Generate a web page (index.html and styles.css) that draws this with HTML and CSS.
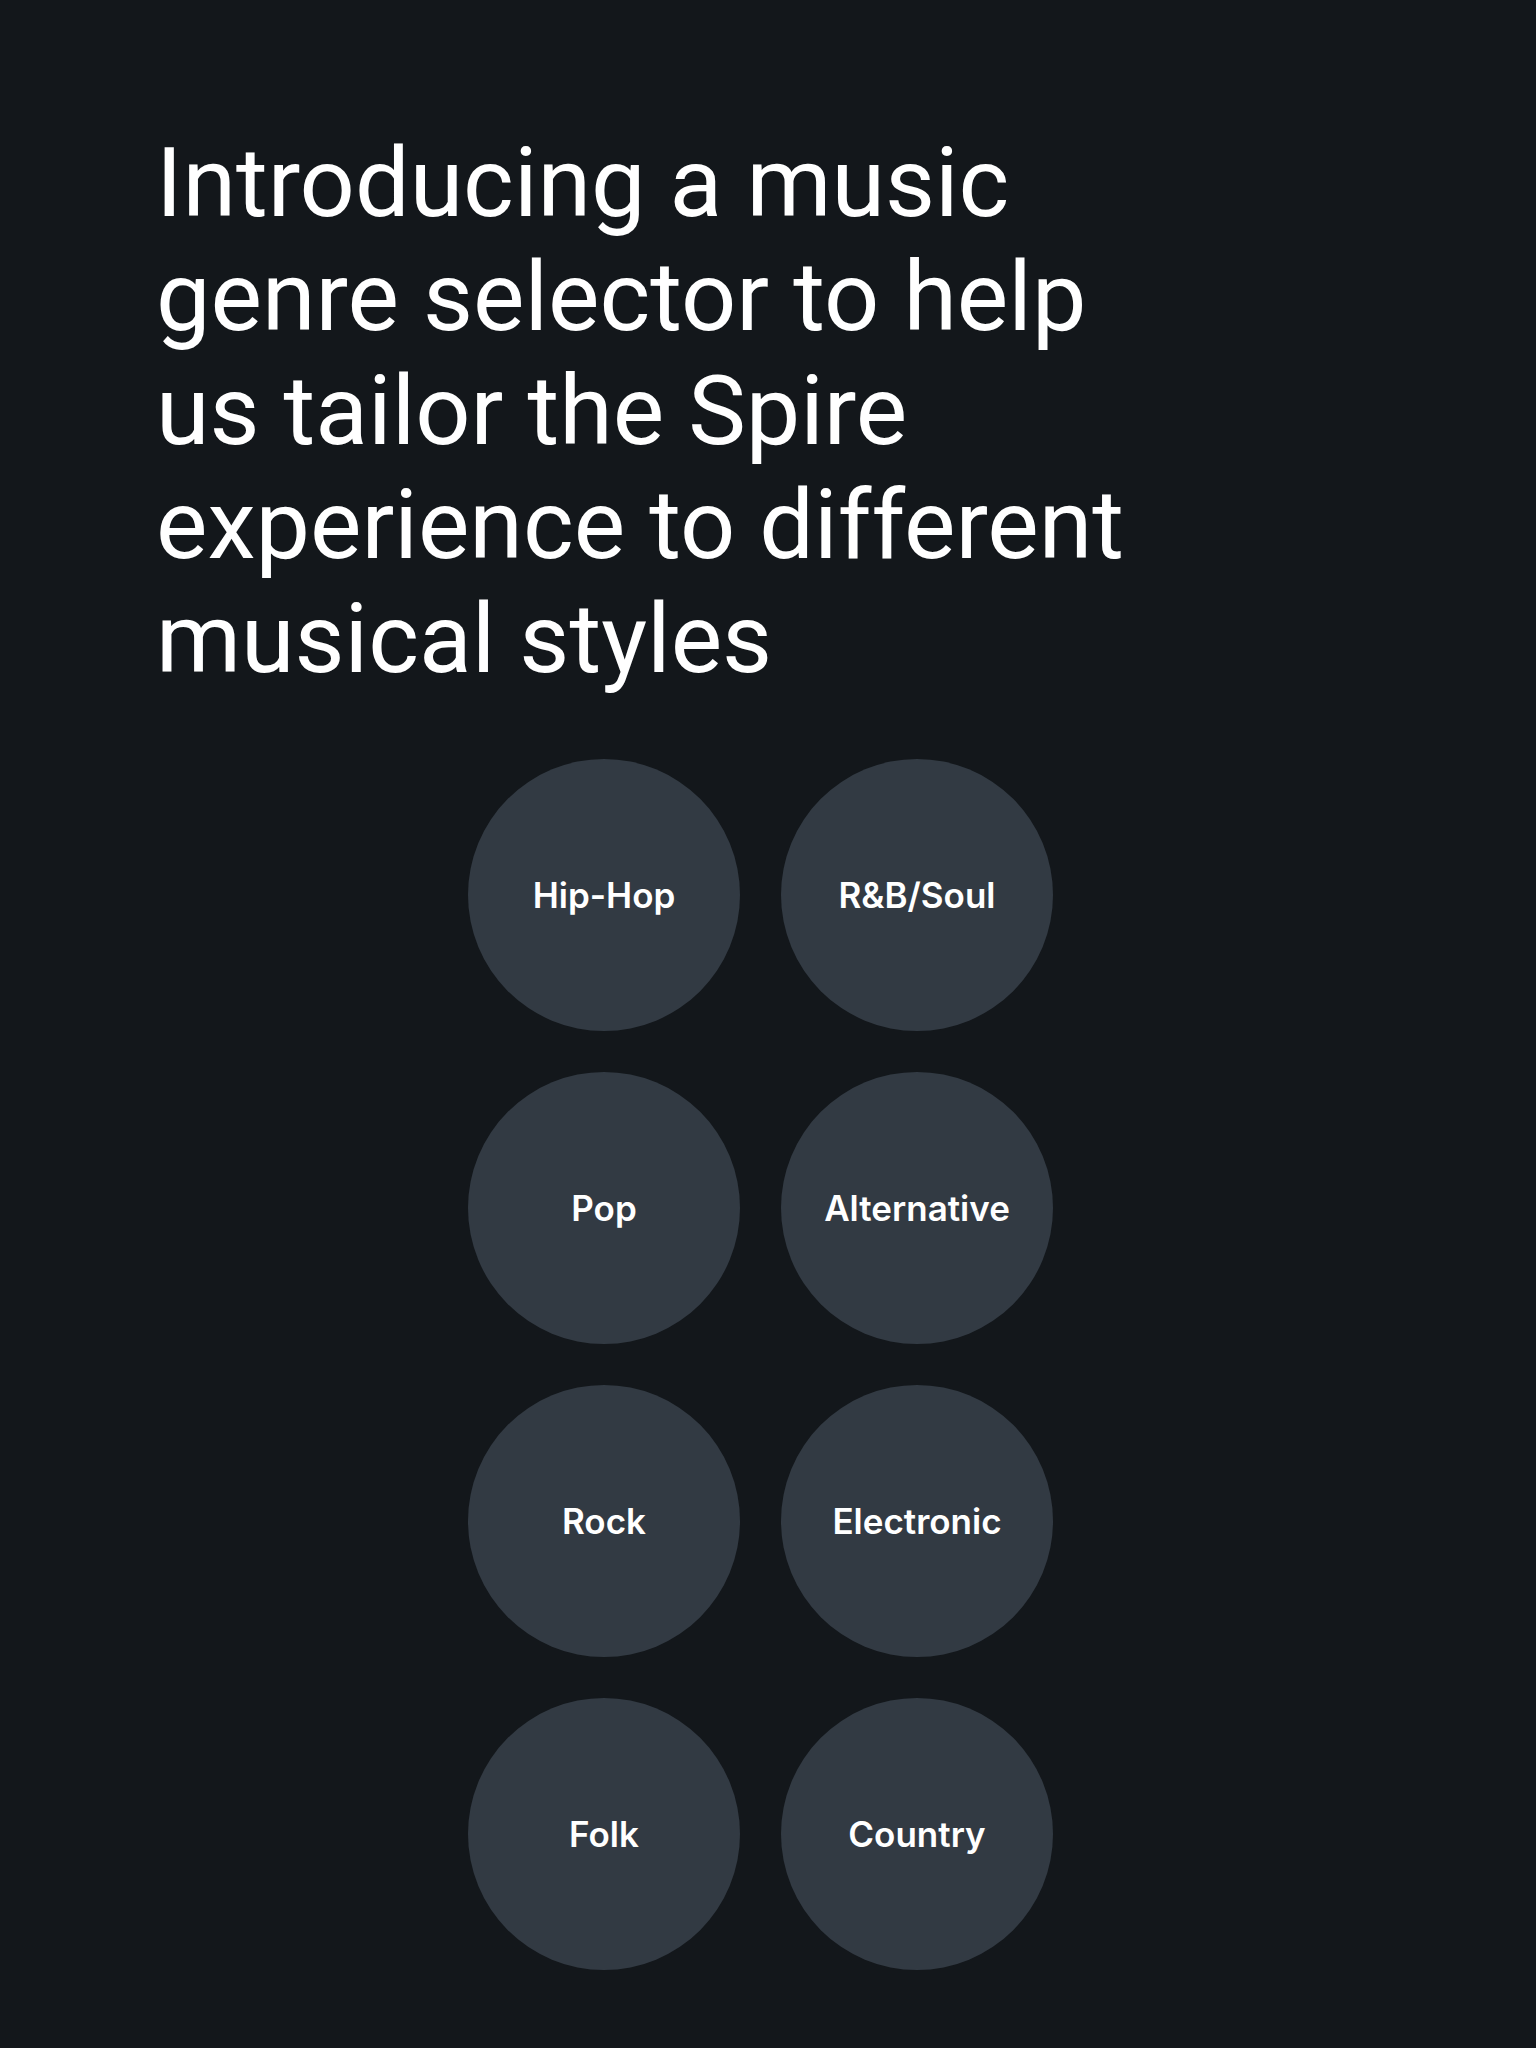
FILE: index.html
```html
<!DOCTYPE html>
<html lang="en">
<head>
    <meta charset="UTF-8">
    <meta name="viewport" content="width=device-width, initial-scale=1.0">
    <title>Spire - Genre Selector</title>
    <link rel="stylesheet" href="styles.css">
</head>
<body>
    <main class="page">
        <h1 class="intro">Introducing a music genre selector to help us tailor the Spire experience to different musical styles</h1>

        <div class="genre-grid">
            <button class="genre" type="button">Hip-Hop</button>
            <button class="genre" type="button">R&amp;B/Soul</button>
            <button class="genre" type="button">Pop</button>
            <button class="genre" type="button">Alternative</button>
            <button class="genre" type="button">Rock</button>
            <button class="genre" type="button">Electronic</button>
            <button class="genre" type="button">Folk</button>
            <button class="genre" type="button">Country</button>
        </div>
    </main>
</body>
</html>
```

FILE: styles.css
```css
* {
    box-sizing: border-box;
}

body {
    margin: 0;
    background-color: #13171b;
    color: #fff;
    font-family: Inter, "Liberation Sans", sans-serif;
}

.page {
    padding: 126px 171px 78px 156px;
}

.intro {
    max-width: 1000px;
    margin: 0 0 63px;
    font-family: Roboto, "Liberation Sans", sans-serif;
    font-size: 97px;
    font-weight: 400;
    line-height: 114px;
}

.genre-grid {
    display: grid;
    grid-template-columns: repeat(2, 272px);
    gap: 41px;
    justify-content: center;
}

.genre {
    height: 272px;
    padding: 0;
    border: none;
    border-radius: 50%;
    background-color: #323a43;
    color: #fff;
    font-family: inherit;
    font-size: 35px;
    font-weight: 600;
    cursor: pointer;
}
```
